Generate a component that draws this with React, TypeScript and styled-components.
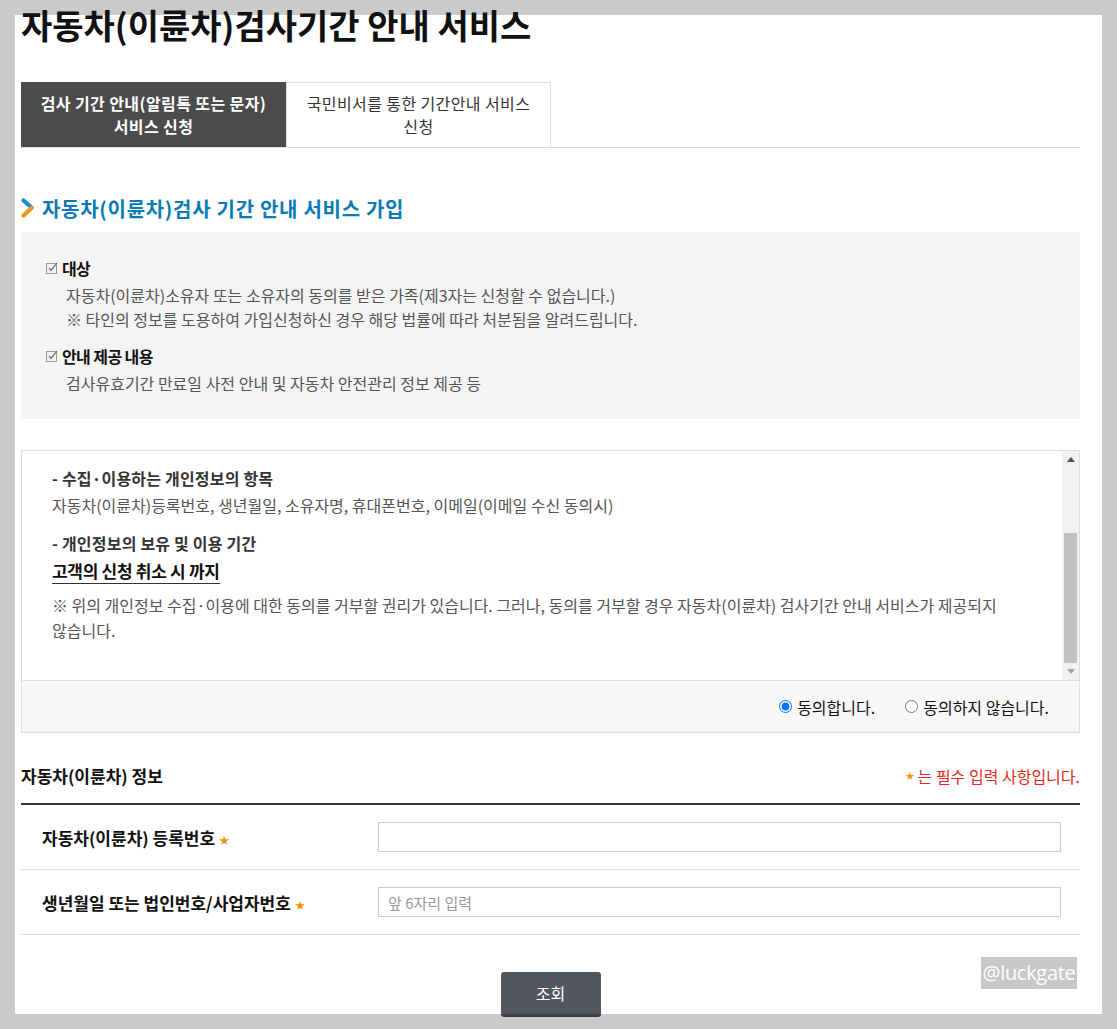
import React from 'react';
import styled, { createGlobalStyle } from 'styled-components';

const GlobalStyle = createGlobalStyle`
  html, body {
    margin: 0;
    padding: 0;
    background: #cacaca;
  }
  body {
    font-family: "Noto Sans CJK KR", "Noto Sans", sans-serif;
    color: #333;
  }
  * {
    box-sizing: border-box;
  }
`;

const Frame = styled.div`
  padding: 15px 15px 0 15px;
  width: 1117px;
  height: 1029px;
  overflow: hidden;
`;

const Panel = styled.div`
  position: relative;
  display: flow-root;
  background: #fff;
  height: 999px;
  padding: 0 22px 0 6px;
`;

const PageTitle = styled.h1`
  margin: -10px 0 0 0;
  font-size: 34px;
  line-height: 40px;
  font-weight: 700;
  color: #111;
`;

const TabBar = styled.div`
  display: flex;
  margin-top: 37px;
  border-bottom: 1px solid #ddd;
`;

const Tab = styled.div<{ $active?: boolean }>`
  width: 265px;
  height: 65px;
  display: flex;
  align-items: center;
  justify-content: center;
  text-align: center;
  font-size: 16px;
  line-height: 23px;
  letter-spacing: 0.4px;
  font-weight: ${(p) => (p.$active ? 700 : 400)};
  color: ${(p) => (p.$active ? '#fff' : '#333')};
  background: ${(p) => (p.$active ? '#4b4b4b' : '#fff')};
  border: ${(p) => (p.$active ? 'none' : '1px solid #ddd')};
  border-bottom: none;
`;

const SectionHeading = styled.h2`
  display: flex;
  align-items: center;
  gap: 7px;
  margin: 45px 0 0 0;
  height: 30px;
  font-size: 20px;
  font-weight: 700;
  letter-spacing: 0.7px;
  color: #0a7ab5;
`;

const InfoBox = styled.div`
  margin-top: 9px;
  background: #f4f4f4;
  padding: 24px 25px 24px 25px;
`;

const InfoItem = styled.div`
  & + & {
    margin-top: 13px;
  }
`;

const InfoTitle = styled.div`
  display: flex;
  align-items: center;
  gap: 4px;
  font-size: 16px;
  line-height: 24px;
  font-weight: 700;
  color: #111;
  letter-spacing: -0.6px;
`;

const InfoText = styled.p`
  margin: 3px 0 0 20px;
  font-size: 16px;
  line-height: 24px;
  color: #555;
`;

const AgreeBox = styled.div`
  margin-top: 31px;
  border: 1px solid #ddd;
`;

const TermsPane = styled.div`
  display: flex;
  height: 229px;
  background: #fff;
`;

const TermsContent = styled.div`
  flex: 1;
  overflow: hidden;
  padding: 15px 30px 0 30px;
`;

const ScrollTrack = styled.div`
  width: 17px;
  display: flex;
  flex-direction: column;
  background: #f1f1f1;
`;

const ScrollButton = styled.div`
  height: 17px;
  display: flex;
  align-items: center;
  justify-content: center;
`;

const ScrollSpacer = styled.div`
  flex: 1;
`;

const ScrollThumb = styled.div`
  height: 130px;
  margin: 0 2px;
  background: #c1c1c1;
`;

const TermBlock = styled.div`
  & + & {
    margin-top: 13px;
  }
`;

const TermHeading = styled.div`
  font-size: 16px;
  line-height: 25px;
  font-weight: 700;
  color: #333;
  letter-spacing: 0.2px;
`;

const TermText = styled.p<{ $top?: number }>`
  margin: ${(p) => p.$top ?? 2}px 0 0 0;
  font-size: 16px;
  line-height: 25px;
  color: #555;
  word-break: keep-all;
`;

const Period = styled.div`
  display: inline-block;
  margin-top: 2px;
  font-size: 17px;
  line-height: 25px;
  font-weight: 700;
  color: #111;
  letter-spacing: -0.3px;
  border-bottom: 1px solid #333;
`;

const AgreeFooter = styled.div`
  display: flex;
  justify-content: flex-end;
  align-items: center;
  gap: 30px;
  height: 52px;
  padding-right: 30px;
  border-top: 1px solid #ddd;
  background: #f7f7f7;
`;

const RadioLabel = styled.label`
  display: flex;
  align-items: center;
  font-size: 16px;
  color: #111;

  input {
    margin: 0 5px 0 0;
    width: 13px;
    height: 13px;
  }
`;

const FormHeader = styled.div`
  display: flex;
  justify-content: space-between;
  align-items: center;
  margin-top: 28px;
  height: 44px;
  padding-bottom: 13px;
  border-bottom: 2px solid #33363b;
`;

const FormTitle = styled.h3`
  margin: 0;
  font-size: 17px;
  font-weight: 700;
  color: #111;
`;

const RequiredNote = styled.div`
  display: flex;
  align-items: center;
  gap: 3px;
  font-size: 16px;
  color: #e3281c;
`;

const Star = styled.span<{ $size?: number }>`
  color: #f39200;
  font-size: ${(p) => p.$size ?? 10}px;
  line-height: 1;
`;

const FormRow = styled.div`
  display: flex;
  align-items: center;
  height: 65px;
  border-bottom: 1px solid #ddd;
  padding-right: 19px;
`;

const FieldLabel = styled.div`
  width: 357px;
  padding-left: 21px;
  display: flex;
  align-items: center;
  gap: 4px;
  font-size: 17px;
  font-weight: 700;
  color: #111;

  ${Star} {
    margin-top: 6px;
  }
`;

const TextInput = styled.input`
  flex: 1;
  height: 30px;
  border: 1px solid #ccc;
  padding: 0 9px;
  font-family: inherit;
  font-size: 15px;
  color: #333;
  outline: none;

  &::placeholder {
    color: #999;
  }
`;

const Actions = styled.div`
  display: flex;
  justify-content: center;
  margin-top: 37px;
`;

const SearchButton = styled.button`
  width: 100px;
  height: 45px;
  border: none;
  border-bottom: 3px solid #3d4046;
  border-radius: 3px;
  background: #52565e;
  color: #fff;
  font-family: inherit;
  font-size: 16px;
  cursor: pointer;
`;

const Watermark = styled.div`
  position: absolute;
  left: 966px;
  top: 942px;
  width: 96px;
  height: 32px;
  background: #c8c8c8;
  color: #fff;
  font-family: "Open Sans", "DejaVu Sans", sans-serif;
  font-size: 20px;
  line-height: 32px;
  text-align: center;
  letter-spacing: -0.3px;
`;

const Chevron = () => (
  <svg width="14" height="20" viewBox="0 0 14 20">
    <path d="M2.5 2.5 L10.5 9.5" stroke="#1a8fd0" strokeWidth="4.2" strokeLinecap="round" fill="none" />
    <path d="M10.5 10 L2.5 17.5" stroke="#f7931e" strokeWidth="4.2" strokeLinecap="round" fill="none" />
  </svg>
);

const CheckIcon = () => (
  <svg width="12" height="12" viewBox="0 0 12 12">
    <rect x="0.5" y="1.5" width="10" height="10" fill="none" stroke="#999" />
    <path d="M3 6 L5 8.5 L11 1" stroke="#777" strokeWidth="1.4" fill="none" />
  </svg>
);

const Arrow = ({ up, color }: { up?: boolean; color: string }) => (
  <svg width="8" height="5" viewBox="0 0 8 5">
    <path d={up ? 'M0 5 L4 0 L8 5 Z' : 'M0 0 L4 5 L8 0 Z'} fill={color} />
  </svg>
);

export default function App() {
  return (
    <>
      <GlobalStyle />
      <Frame>
        <Panel>
          <PageTitle>자동차(이륜차)검사기간 안내 서비스</PageTitle>

          <TabBar>
            <Tab $active>
              검사 기간 안내(알림톡 또는 문자)
              <br />
              서비스 신청
            </Tab>
            <Tab>
              국민비서를 통한 기간안내 서비스
              <br />
              신청
            </Tab>
          </TabBar>

          <SectionHeading>
            <Chevron />
            자동차(이륜차)검사 기간 안내 서비스 가입
          </SectionHeading>

          <InfoBox>
            <InfoItem>
              <InfoTitle>
                <CheckIcon />
                대상
              </InfoTitle>
              <InfoText>
                자동차(이륜차)소유자 또는 소유자의 동의를 받은 가족(제3자는 신청할 수 없습니다.)
                <br />※ 타인의 정보를 도용하여 가입신청하신 경우 해당 법률에 따라 처분됨을 알려드립니다.
              </InfoText>
            </InfoItem>
            <InfoItem>
              <InfoTitle>
                <CheckIcon />
                안내 제공 내용
              </InfoTitle>
              <InfoText>검사유효기간 만료일 사전 안내 및 자동차 안전관리 정보 제공 등</InfoText>
            </InfoItem>
          </InfoBox>

          <AgreeBox>
            <TermsPane>
              <TermsContent>
                <TermBlock>
                  <TermHeading>- 수집·이용하는 개인정보의 항목</TermHeading>
                  <TermText>
                    자동차(이륜차)등록번호, 생년월일, 소유자명, 휴대폰번호, 이메일(이메일 수신 동의시)
                  </TermText>
                </TermBlock>
                <TermBlock>
                  <TermHeading>- 개인정보의 보유 및 이용 기간</TermHeading>
                  <Period>고객의 신청 취소 시 까지</Period>
                  <TermText $top={9}>
                    ※ 위의 개인정보 수집·이용에 대한 동의를 거부할 권리가 있습니다. 그러나, 동의를 거부할 경우
                    자동차(이륜차) 검사기간 안내 서비스가 제공되지 않습니다.
                  </TermText>
                </TermBlock>
              </TermsContent>
              <ScrollTrack>
                <ScrollButton>
                  <Arrow up color="#505050" />
                </ScrollButton>
                <ScrollSpacer />
                <ScrollThumb />
                <ScrollButton>
                  <Arrow color="#a3a3a3" />
                </ScrollButton>
              </ScrollTrack>
            </TermsPane>
            <AgreeFooter>
              <RadioLabel>
                <input type="radio" name="agree" defaultChecked />
                동의합니다.
              </RadioLabel>
              <RadioLabel>
                <input type="radio" name="agree" />
                동의하지 않습니다.
              </RadioLabel>
            </AgreeFooter>
          </AgreeBox>

          <FormHeader>
            <FormTitle>자동차(이륜차) 정보</FormTitle>
            <RequiredNote>
              <Star $size={9}>★</Star>는 필수 입력 사항입니다.
            </RequiredNote>
          </FormHeader>
          <FormRow>
            <FieldLabel>
              자동차(이륜차) 등록번호 <Star>★</Star>
            </FieldLabel>
            <TextInput type="text" />
          </FormRow>
          <FormRow>
            <FieldLabel>
              생년월일 또는 법인번호/사업자번호 <Star>★</Star>
            </FieldLabel>
            <TextInput type="text" placeholder="앞 6자리 입력" />
          </FormRow>

          <Actions>
            <SearchButton type="button">조회</SearchButton>
          </Actions>

          <Watermark>@luckgate</Watermark>
        </Panel>
      </Frame>
    </>
  );
}
